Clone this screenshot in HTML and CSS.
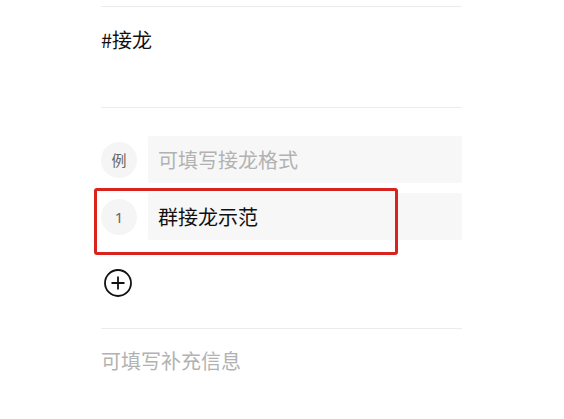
FILE: index.html
```html
<!DOCTYPE html>
<html>
    <head>
        <title>接龙</title>
        <link rel="stylesheet" href="styles.css">
    </head>
    <body>
        <div class="form">
            <div class="title">#接龙</div>
            <div class="items">
                <div class="item">
                    <div class="num">例</div>
                    <div class="field placeholder">可填写接龙格式</div>
                </div>
                <div class="item marked">
                    <div class="num">1</div>
                    <div class="field">群接龙示范</div>
                    <div class="highlight"></div>
                </div>
                <div class="add">
                    <svg width="28" height="28" viewBox="0 0 28 28">
                        <circle cx="14" cy="14" r="13" fill="none" stroke="#111" stroke-width="1.8"/>
                        <path d="M14 7.5 V20.5 M7.5 14 H20.5" stroke="#111" stroke-width="1.8"/>
                    </svg>
                </div>
            </div>
            <div class="extra">可填写补充信息</div>
        </div>
    </body>
</html>
```

FILE: styles.css
```css
body {
    margin: 0;
    background-color: #fff;
    font-family: "Noto Sans CJK SC", "Noto Sans", sans-serif;
}
.form {
    margin-left: 101px;
    width: 361px;
    padding-top: 6px;
}
.title {
    border-top: 1px solid #ececec;
    border-bottom: 1px solid #ececec;
    height: 81px;
    padding-top: 19px;
    font-size: 20px;
    line-height: 28px;
    color: #111;
}
.items {
    display: flex;
    flex-direction: column;
    gap: 10px;
    padding-top: 28px;
    padding-bottom: 31px;
    border-bottom: 1px solid #ececec;
}
.item {
    position: relative;
    display: flex;
    align-items: center;
    gap: 11px;
}
.num {
    width: 36px;
    height: 36px;
    border-radius: 50%;
    background-color: #f5f5f5;
    color: #666;
    font-family: "Noto Sans", "Noto Sans CJK SC", sans-serif;
    font-size: 15px;
    display: flex;
    align-items: center;
    justify-content: center;
}
.field {
    flex: 1;
    height: 47px;
    background-color: #f7f7f7;
    border-radius: 2px;
    padding-left: 10px;
    font-size: 20px;
    line-height: 47px;
    color: #111;
}
.placeholder {
    color: #b2b2b2;
}
.highlight {
    position: absolute;
    left: -7px;
    top: -5px;
    width: 298px;
    height: 61px;
    border: 3px solid #d8231e;
    border-radius: 3px;
}
.add {
    margin-top: 19px;
    padding-left: 3px;
    height: 28px;
}
.extra {
    padding-top: 18px;
    font-size: 20px;
    line-height: 28px;
    color: #b2b2b2;
}
```
